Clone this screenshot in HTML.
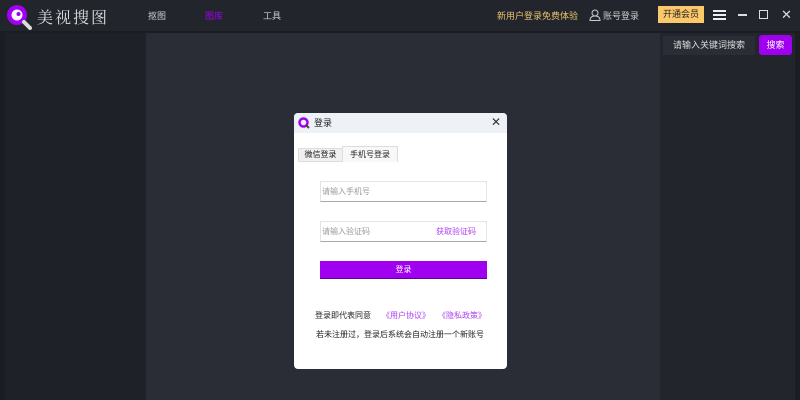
<!DOCTYPE html>
<html><head><meta charset="utf-8"><style>
*{margin:0;padding:0;box-sizing:border-box}
body{width:800px;height:400px;overflow:hidden;background:#1b1d22;font-family:"Liberation Sans","Noto Sans CJK SC",sans-serif;font-size:9px;position:relative}
.a{position:absolute}
</style></head><body>
<div class="a" style="left:0;top:0;width:800px;height:31px;background:#22252b"></div>
<div class="a" style="left:5px;top:33px;width:141px;height:367px;background:#1f2128"></div>
<div class="a" style="left:146px;top:33px;width:514px;height:367px;background:#2a2d35"></div>
<div class="a" style="left:660px;top:33px;width:135px;height:367px;background:#22252b"></div>
<svg class="a" style="left:6px;top:4px" width="26" height="26" viewBox="0 0 26 26"><circle cx="11" cy="11" r="10" fill="#a100f2"/><circle cx="11" cy="11" r="5.5" fill="#fff"/><circle cx="12.5" cy="10" r="2" fill="#a100f2"/><path d="M18 18 L24 24" stroke="#ddd" stroke-width="4" stroke-linecap="round"/></svg>
<div class="a" style="left:37px;top:5px;font-family:'Noto Serif CJK SC',serif;font-size:16px;color:#ddd;letter-spacing:2px">美视搜图</div>
<div class="a" style="left:148px;top:9px;color:#ccc">抠图</div>
<div class="a" style="left:205px;top:9px;color:#a000f0">图库</div>
<div class="a" style="left:263px;top:9px;color:#ccc">工具</div>
<div class="a" style="left:497px;top:9px;color:#e8c070">新用户登录免费体验</div>
<svg class="a" style="left:589px;top:9px" width="12" height="12" viewBox="0 0 12 12" fill="none" stroke="#ccc"><circle cx="6" cy="4" r="3"/><path d="M1 11.5 C1 8 3 7 6 7 C9 7 11 8 11 11.5Z"/></svg>
<div class="a" style="left:603px;top:9px;color:#ccc">账号登录</div>
<div class="a" style="left:658px;top:6px;width:46px;height:17px;background:#fcc96a;color:#222;text-align:center;line-height:17px">开通会员</div>
<div class="a" style="left:713px;top:10px;width:13px;height:2px;background:#eee;box-shadow:0 4px #eee,0 8px #eee"></div>
<div class="a" style="left:738px;top:14px;width:9px;height:1.5px;background:#ddd"></div>
<div class="a" style="left:759px;top:10px;width:9px;height:9px;border:1.5px solid #ddd"></div>
<div class="a" style="left:781px;top:7px;color:#ddd;font-size:13px">✕</div>
<div class="a" style="left:663px;top:36px;width:92px;height:19px;background:#2a2d35;color:#ddd;text-align:center;line-height:19px">请输入关键词搜索</div>
<div class="a" style="left:759px;top:35px;width:33px;height:20px;background:#a000f0;border-radius:3px;color:#fff;text-align:center;line-height:20px">搜索</div>
<div class="a" style="left:294px;top:113px;width:213px;height:256px;background:#fff;border-radius:4px;overflow:hidden;font-size:8px">
 <div class="a" style="left:0;top:0;width:213px;height:20px;background:#eef2f6"></div>
 <svg class="a" style="left:4px;top:4px" width="12" height="12" viewBox="0 0 12 12"><circle cx="5.5" cy="5.5" r="4" fill="none" stroke="#a000f0" stroke-width="2.5"/><path d="M8 8 L11 11" stroke="#444" stroke-width="2"/></svg>
 <div class="a" style="left:20px;top:3px;color:#222;font-size:9px">登录</div>
 <div class="a" style="left:197px;top:2px;color:#333;font-size:12px">✕</div>
 <div class="a" style="left:4px;top:35px;width:45px;height:14px;background:#f0f0f0;border:1px solid #ddd;color:#222;text-align:center;line-height:12px">微信登录</div>
 <div class="a" style="left:48px;top:33px;width:56px;height:16px;background:#f8f8f8;border:1px solid #ddd;border-bottom:none;color:#222;text-align:center;line-height:15px">手机号登录</div>
 <div class="a" style="left:26px;top:68px;width:167px;height:21px;border:1px solid #e4e4e4;border-bottom:1px solid #aaa;color:#999;line-height:19px;padding-left:1px">请输入手机号</div>
 <div class="a" style="left:26px;top:108px;width:167px;height:21px;border:1px solid #e4e4e4;border-bottom:1px solid #aaa;color:#999;line-height:19px;padding-left:1px">请输入验证码<span style="position:absolute;left:115px;color:#b040f0">获取验证码</span></div>
 <div class="a" style="left:26px;top:148px;width:167px;height:18px;background:#a000f0;border-bottom:1px solid #600090;color:#fff;text-align:center;line-height:17px">登录</div>
 <div class="a" style="left:21px;top:197px;color:#222">登录即代表同意</div>
 <div class="a" style="left:88px;top:197px;color:#b040f0">《用户协议》</div>
 <div class="a" style="left:144px;top:197px;color:#b040f0">《隐私政策》</div>
 <div class="a" style="left:22px;top:216px;color:#222">若未注册过，登录后系统会自动注册一个新账号</div>
</div>
</body></html>
